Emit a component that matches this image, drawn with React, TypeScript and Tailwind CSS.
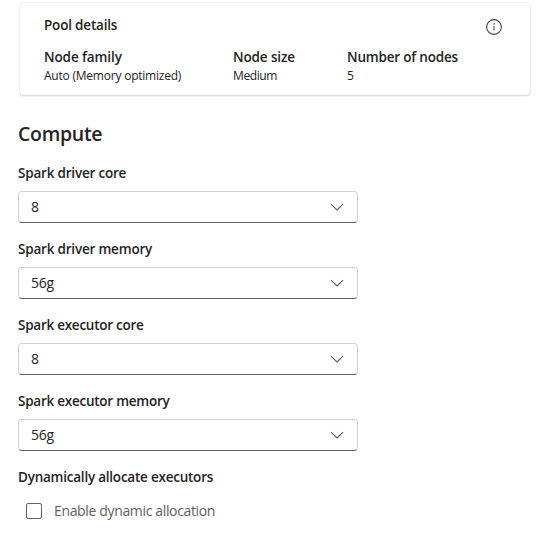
type Detail = { label: string; value: string; width: string; labelClass: string; valueClass: string };

const details: Detail[] = [
  { label: 'Node family', value: 'Auto (Memory optimized)', width: 'w-[189px]', labelClass: 'tracking-[-0.1px]', valueClass: 'tracking-[-0.22px]' },
  { label: 'Node size', value: 'Medium', width: 'w-[114px]', labelClass: 'tracking-[-0.12px]', valueClass: 'tracking-[-0.4px]' },
  { label: 'Number of nodes', value: '5', width: 'w-[130px]', labelClass: 'tracking-[-0.19px]', valueClass: '' },
];

const fields = [
  { label: 'Spark driver core', value: '8', labelClass: 'tracking-[-0.2px]' },
  { label: 'Spark driver memory', value: '56g', labelClass: 'tracking-[-0.2px]' },
  { label: 'Spark executor core', value: '8', labelClass: 'tracking-[-0.26px]' },
  { label: 'Spark executor memory', value: '56g', labelClass: 'tracking-[-0.25px]' },
];

const labelText = 'text-[13.5px] leading-5 font-semibold';

function InfoIcon() {
  return (
    <svg width="16" height="16" viewBox="0 0 16 16" fill="none">
      <circle cx="8" cy="8" r="7.4" stroke="#424242" strokeWidth="1.1" />
      <path d="M8 7v4.5" stroke="#424242" strokeWidth="1" />
      <circle cx="8" cy="5" r="0.75" fill="#424242" />
    </svg>
  );
}

function ChevronIcon() {
  return (
    <svg width="14" height="8" viewBox="0 0 14 8" fill="none">
      <path d="M1.2 1.3l5.8 5.7L12.8 1.3" stroke="#616161" strokeWidth="1.1" strokeLinecap="round" strokeLinejoin="round" />
    </svg>
  );
}

function SelectField({ label, value, labelClass }: { label: string; value: string; labelClass: string }) {
  return (
    <div className="flex flex-col items-start gap-2">
      <span className={`${labelText} ${labelClass}`}>{label}</span>
      <button className="flex h-8 w-[340px] items-center justify-between rounded-[4px] border border-[#d1d1d1] border-b-[#616161] bg-white pr-[13px] pl-3 text-sm leading-5">
        <span className="tracking-[-0.25px]">{value}</span>
        <ChevronIcon />
      </button>
    </div>
  );
}

export default function App() {
  return (
    <main className="h-[536px] w-[537px] overflow-hidden bg-white pt-[3px] font-['Open_Sans','Noto_Sans',sans-serif] whitespace-nowrap text-[#242424]">
      <section className="ml-5 h-[92px] w-[510px] rounded-[4px] bg-white pt-3 pr-7 pl-6 shadow-[0_0_2px_rgba(0,0,0,0.14),0_1px_2px_rgba(0,0,0,0.16)]">
        <header className="flex h-8 items-start justify-between">
          <h2 className={`${labelText} tracking-[-0.19px]`}>Pool details</h2>
          <div className="pt-1">
            <InfoIcon />
          </div>
        </header>
        <dl className="flex">
          {details.map((d) => (
            <div key={d.label} className={d.width}>
              <dt className={`${labelText} ${d.labelClass}`}>{d.label}</dt>
              <dd className={`pt-px text-xs leading-4 ${d.valueClass}`}>{d.value}</dd>
            </div>
          ))}
        </dl>
      </section>
      <section className="mt-[25px] ml-[18px]">
        <h1 className="text-[19.5px] leading-7 font-semibold tracking-[-0.3px]">Compute</h1>
        <div className="mt-[15px] flex flex-col gap-4">
          {fields.map((f) => (
            <SelectField key={f.label} {...f} />
          ))}
          <div>
            <h3 className={`${labelText} tracking-[-0.23px]`}>Dynamically allocate executors</h3>
            <label className="mt-[14px] flex items-center gap-3 pl-2 text-sm leading-5 text-[#616161]">
              <span className="size-4 rounded-[2px] border border-[#616161]" />
              <span className="tracking-[-0.35px]">Enable dynamic allocation</span>
            </label>
          </div>
        </div>
      </section>
    </main>
  );
}
